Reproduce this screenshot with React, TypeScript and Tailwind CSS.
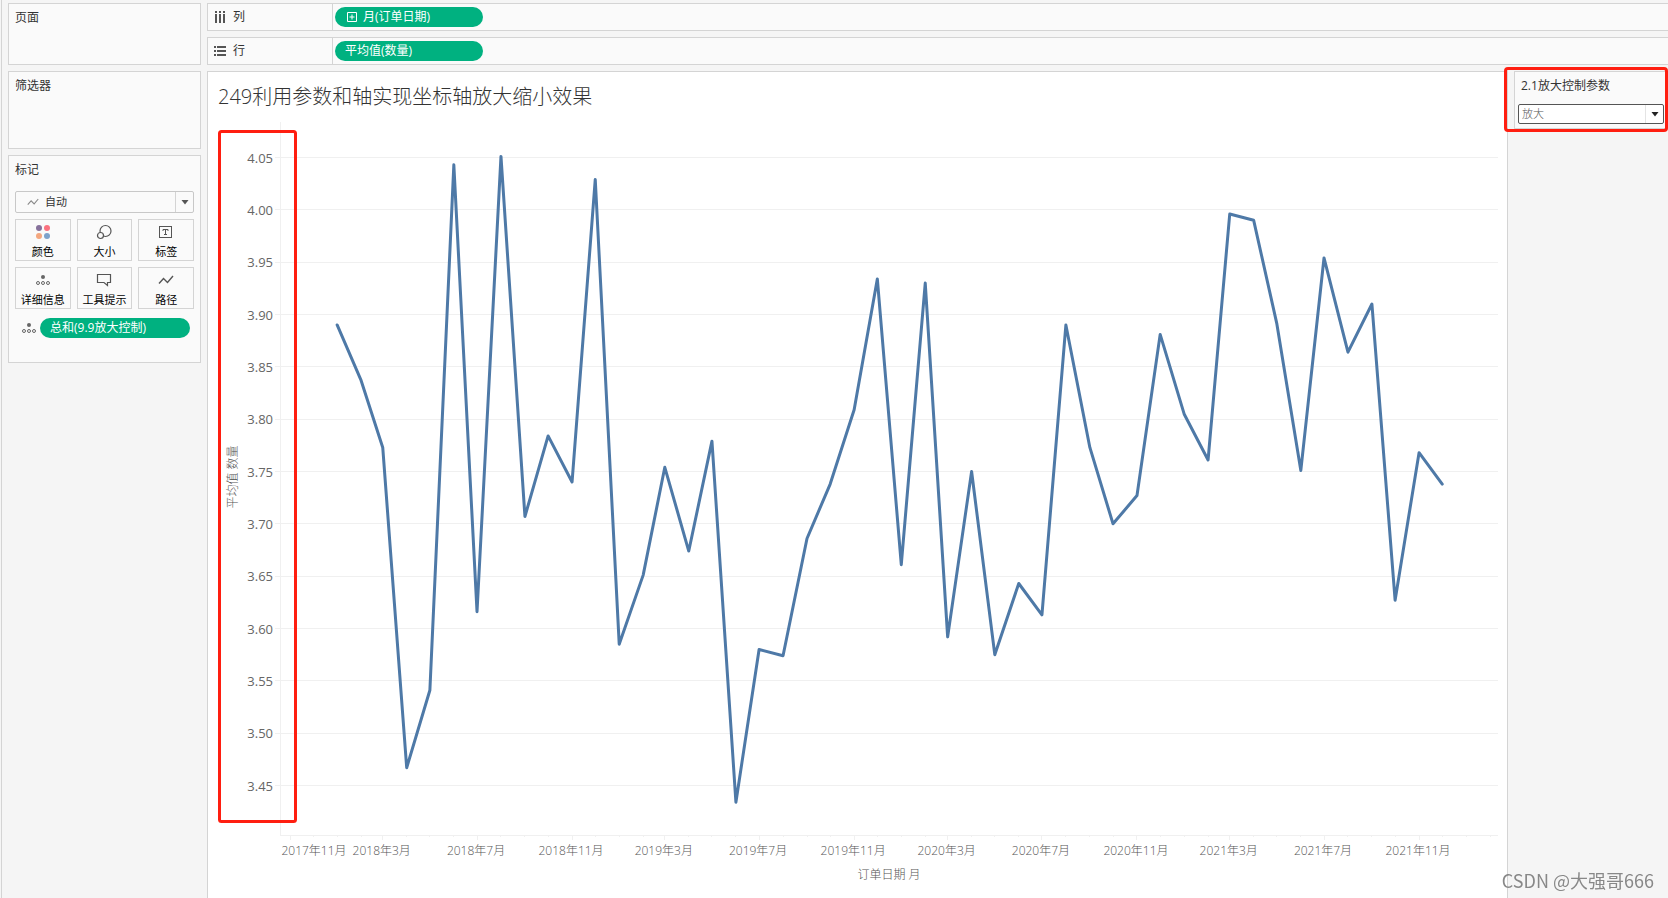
import { useState } from 'react';
import type { ReactNode } from 'react';

// average quantity per month, 2018-01 .. 2021-12
const VALUES = [
  3.89, 3.837, 3.773, 3.467, 3.541, 4.043, 3.616, 4.051, 3.707, 3.784, 3.74, 4.029,
  3.585, 3.651, 3.754, 3.674, 3.779, 3.434, 3.58, 3.574, 3.686, 3.738, 3.809, 3.934,
  3.661, 3.93, 3.592, 3.75, 3.575, 3.643, 3.613, 3.89, 3.773, 3.7, 3.727, 3.881,
  3.805, 3.761, 3.996, 3.99, 3.891, 3.751, 3.954, 3.864, 3.91, 3.627, 3.768, 3.738,
];

const CHART = { width: 1299, height: 776, left: 72, right: 1290, bottom: 713 };
const DAY = 24 * 60 * 60 * 1000;
const START = Date.UTC(2017, 10, 1);

// month index 0 = 2017-11
const monthX = (month: number) => 82 + ((Date.UTC(2017, 10 + month, 1) - START) / DAY) * 0.7728;
const valueY = (value: number) => 35.5 + (4.05 - value) * 1046.67;

const monthLabel = (month: number) => {
  const date = new Date(Date.UTC(2017, 10 + month, 1));
  return `${date.getUTCFullYear()}年${date.getUTCMonth() + 1}月`;
};

const yTicks = Array.from({ length: 13 }, (_, i) => 4.05 - i * 0.05);
const months = Array.from({ length: 52 }, (_, i) => i);

const LineChart = () => {
  const points = VALUES.map((v, i) => `${monthX(i + 2)},${valueY(v)}`).join(' ');

  return (
    <svg
      viewBox={`0 0 ${CHART.width} ${CHART.height}`}
      className="block w-full"
      role="img"
      aria-label="平均值 数量"
    >
      <g stroke="#f0f0f0" strokeWidth="1" shapeRendering="crispEdges">
        {yTicks.map((tick) => (
          <line key={tick} x1={CHART.left - 5} x2={CHART.right} y1={valueY(tick)} y2={valueY(tick)} />
        ))}
        <line x1={CHART.left + 0.5} x2={CHART.left + 0.5} y1="0" y2={CHART.bottom} />
        <line x1={CHART.left} x2={CHART.right} y1={CHART.bottom + 0.5} y2={CHART.bottom + 0.5} />
        {months.map((m) => (
          <line
            key={m}
            x1={monthX(m)}
            x2={monthX(m)}
            y1={CHART.bottom}
            y2={CHART.bottom + (m % 4 === 0 ? 5 : 2)}
          />
        ))}
      </g>

      <g fill="#666666" fontSize="13" textAnchor="end">
        {yTicks.map((tick) => (
          <text key={tick} x="65" y={valueY(tick) + 5}>
            {tick.toFixed(2)}
          </text>
        ))}
      </g>

      <g fill="#555555" fontSize="12" textAnchor="middle" className="font-light">
        {months
          .filter((m) => m % 4 === 0 && m < 50)
          .map((m) => (
            <text key={m} x={m === 0 ? 106 : monthX(m) - 1} y="733">
              {monthLabel(m)}
            </text>
          ))}
        <text x="681" y="757">
          订单日期 月
        </text>
        <text transform="translate(29 355) rotate(-90)">平均值 数量</text>
      </g>

      <polyline
        points={points}
        fill="none"
        stroke="#4e79a7"
        strokeWidth="3"
        strokeLinejoin="round"
        strokeLinecap="round"
      />

      <rect x="11.5" y="9.5" width="76" height="690" rx="2" fill="none" stroke="#ff1e10" strokeWidth="3" />
    </svg>
  );
};

const DetailIcon = () => (
  <svg width="16" height="12" viewBox="0 0 16 12" fill="none" stroke="#666666" aria-hidden="true">
    <circle cx="8" cy="3" r="2" fill="#666666" stroke="none" />
    <circle cx="3" cy="9" r="1.5" />
    <circle cx="8" cy="9" r="1.5" />
    <circle cx="13" cy="9" r="1.5" />
  </svg>
);

const PathIcon = ({ color = '#555555', size = 16 }: { color?: string; size?: number }) => (
  <svg
    width={size}
    height={size}
    viewBox="0 0 16 16"
    fill="none"
    stroke={color}
    strokeWidth="1.4"
    aria-hidden="true"
  >
    <path d="M1 11.5 L5.5 6.5 L9.5 10.5 L15 4" />
  </svg>
);

const ColorIcon = () => (
  <svg width="16" height="16" viewBox="0 0 16 16" aria-hidden="true">
    <circle cx="4" cy="4" r="3" fill="#86719b" />
    <circle cx="12" cy="4" r="3" fill="#fb7280" />
    <circle cx="4" cy="12" r="3" fill="#f4a77f" />
    <circle cx="12" cy="12" r="3" fill="#7ea3cb" />
  </svg>
);

const SizeIcon = () => (
  <svg width="16" height="16" viewBox="0 0 16 16" fill="none" stroke="#555555" strokeWidth="1.2" aria-hidden="true">
    <circle cx="9.5" cy="7" r="5.5" />
    <circle cx="4.5" cy="11.5" r="3" fill="#fafafa" />
  </svg>
);

const LabelIcon = () => (
  <svg width="16" height="16" viewBox="0 0 16 16" fill="none" stroke="#555555" aria-hidden="true">
    <rect x="1.5" y="2.5" width="12" height="11" />
    <path d="M5 7 V5.5 H10 V7 M7.5 5.5 V11 M6 10.5 H9" />
  </svg>
);

const TooltipIcon = () => (
  <svg width="16" height="14" viewBox="0 0 16 14" fill="none" stroke="#555555" strokeWidth="1.2" aria-hidden="true">
    <path d="M1.5 1.5 H14.5 V9.5 H11.5 V12.5 L8 9.5 H1.5 Z" />
  </svg>
);

const ColumnsIcon = () => (
  <svg width="12" height="12" viewBox="0 0 12 12" fill="#555555" aria-hidden="true">
    <path d="M1 0h2v2H1zM5 0h2v2H5zM9 0h2v2H9zM1 3h2v9H1zM5 3h2v9H5zM9 3h2v9H9z" />
  </svg>
);

const RowsIcon = () => (
  <svg width="12" height="12" viewBox="0 0 12 12" fill="#555555" aria-hidden="true">
    <path d="M0 1h2v2H0zM0 5h2v2H0zM0 9h2v2H0zM3 1h9v2H3zM3 5h9v2H3zM3 9h9v2H3z" />
  </svg>
);

const Arrow = () => (
  <svg width="8" height="5" viewBox="0 0 8 5" aria-hidden="true">
    <path d="M0.5 0 H7.5 L4 4.5 Z" fill="currentColor" />
  </svg>
);

const marks = [
  { label: '颜色', icon: <ColorIcon /> },
  { label: '大小', icon: <SizeIcon /> },
  { label: '标签', icon: <LabelIcon /> },
  { label: '详细信息', icon: <DetailIcon /> },
  { label: '工具提示', icon: <TooltipIcon /> },
  { label: '路径', icon: <PathIcon /> },
];

const Shelf = ({ label, icon, children }: { label: string; icon: ReactNode; children: ReactNode }) => (
  <div className="flex h-7 border border-r-0 border-[#d4d4d4] bg-[#fafafa]">
    <div className="flex w-[125px] shrink-0 items-center gap-[7px] border-r border-[#d4d4d4] pl-1.5">
      {icon}
      <span>{label}</span>
    </div>
    <div className="flex items-center pl-0.5">{children}</div>
  </div>
);

const pill = 'flex h-5 items-center rounded-full bg-[#00b180] text-left text-white';

const App = () => {
  const [markType, setMarkType] = useState('auto');
  const [zoom, setZoom] = useState('in');

  return (
    <div className="flex min-h-screen bg-[#f5f5f5] font-['Open_Sans','Noto_Sans_CJK_SC',sans-serif] text-xs leading-4 text-[#333333]">
      <div className="w-0.5 shrink-0 border-r border-[#d4d4d4]" />

      <aside className="ml-1.5 flex w-[193px] shrink-0 flex-col gap-1.5 pt-[3px]">
        <section className="h-[62px] border border-[#d4d4d4] bg-[#fafafa] px-1.5 py-1.5">
          <h2>页面</h2>
        </section>
        <section className="h-[78px] border border-[#d4d4d4] bg-[#fafafa] px-1.5 py-1.5">
          <h2>筛选器</h2>
        </section>
        <section className="border border-[#d4d4d4] bg-[#fafafa] px-1.5 pt-1.5 pb-6">
          <h2>标记</h2>
          <div className="relative mt-[13px] h-[22px]">
            <select
              aria-label="标记类型"
              value={markType}
              onChange={(e) => setMarkType(e.target.value)}
              className="h-full w-full appearance-none rounded-xs border border-[#c8c8c8] bg-[#fafafa] pl-[29px] text-[11px]"
            >
              <option value="auto">自动</option>
              <option value="line">线</option>
            </select>
            <span className="pointer-events-none absolute inset-y-0 left-3 flex items-center">
              <PathIcon color="#888888" size={12} />
            </span>
            <span className="pointer-events-none absolute inset-y-px right-px flex w-[18px] items-center justify-center border-l border-[#d4d4d4] text-[#555555]">
              <Arrow />
            </span>
          </div>

          <div className="mt-1.5 grid grid-cols-3 gap-1.5">
            {marks.map(({ label, icon }) => (
              <button
                key={label}
                type="button"
                className="flex h-[42px] flex-col items-center border border-[#d4d4d4] text-[11px] whitespace-nowrap text-black"
              >
                <span className="flex h-6 items-center">{icon}</span>
                <span>{label}</span>
              </button>
            ))}
          </div>

          <div className="mt-[9px] flex items-center gap-[3px] pl-1.5">
            <DetailIcon />
            <button type="button" className={`${pill} w-[150px] pl-2.5`}>
              总和(9.9放大控制)
            </button>
          </div>
        </section>
      </aside>

      <div className="ml-1.5 flex min-w-0 flex-1 flex-col pt-[3px]">
        <div className="flex flex-col gap-1.5">
          <Shelf label="列" icon={<ColumnsIcon />}>
            <button type="button" className={`${pill} w-[148px] gap-1.5 pl-3`}>
              <svg width="10" height="10" viewBox="0 0 10 10" fill="none" stroke="#ffffff" aria-hidden="true">
                <path d="M0.5 0.5 H9.5 V9.5 H0.5 Z M2.5 5 H7.5 M5 2.5 V7.5" />
              </svg>
              月(订单日期)
            </button>
          </Shelf>
          <Shelf label="行" icon={<RowsIcon />}>
            <button type="button" className={`${pill} w-[148px] pl-2.5`}>
              平均值(数量)
            </button>
          </Shelf>
        </div>

        <div className="mt-1.5 flex flex-1">
          <main className="min-w-0 flex-1 border-x border-t border-[#d4d4d4] bg-white">
            <h1 className="h-[50px] pt-[11px] pl-2.5 text-xl leading-7 font-light">
              249利用参数和轴实现坐标轴放大缩小效果
            </h1>
            <LineChart />
          </main>

          <aside className="relative w-40 shrink-0 pl-1.5">
            <div className="h-[58px] border border-r-0 border-[#d4d4d4] bg-[#fafafa] pt-1.5 pr-1 pl-[3px]">
              <label htmlFor="zoom" className="block pl-[3px]">
                2.1放大控制参数
              </label>
              <div className="relative mt-2.5 h-5">
                <select
                  id="zoom"
                  value={zoom}
                  onChange={(e) => setZoom(e.target.value)}
                  className="h-full w-full appearance-none rounded-xs border border-[#555555] bg-white pl-[3px] text-[11px] font-light text-[#555555]"
                >
                  <option value="in">放大</option>
                  <option value="out">缩小</option>
                </select>
                <span className="pointer-events-none absolute inset-y-px right-px flex w-[18px] items-center justify-center border-l border-[#e4e4e4] text-[#222222]">
                  <Arrow />
                </span>
              </div>
            </div>
            <div className="pointer-events-none absolute -top-1 right-0 -left-1 h-[65px] rounded-sm border-3 border-[#ff1e10]" />
          </aside>
        </div>
      </div>

      <p className="pointer-events-none fixed right-3.5 bottom-1.5 font-['Noto_Sans_CJK_SC',sans-serif] text-lg leading-6 text-[#888888]">
        CSDN @大强哥666
      </p>
    </div>
  );
};

export default App;
